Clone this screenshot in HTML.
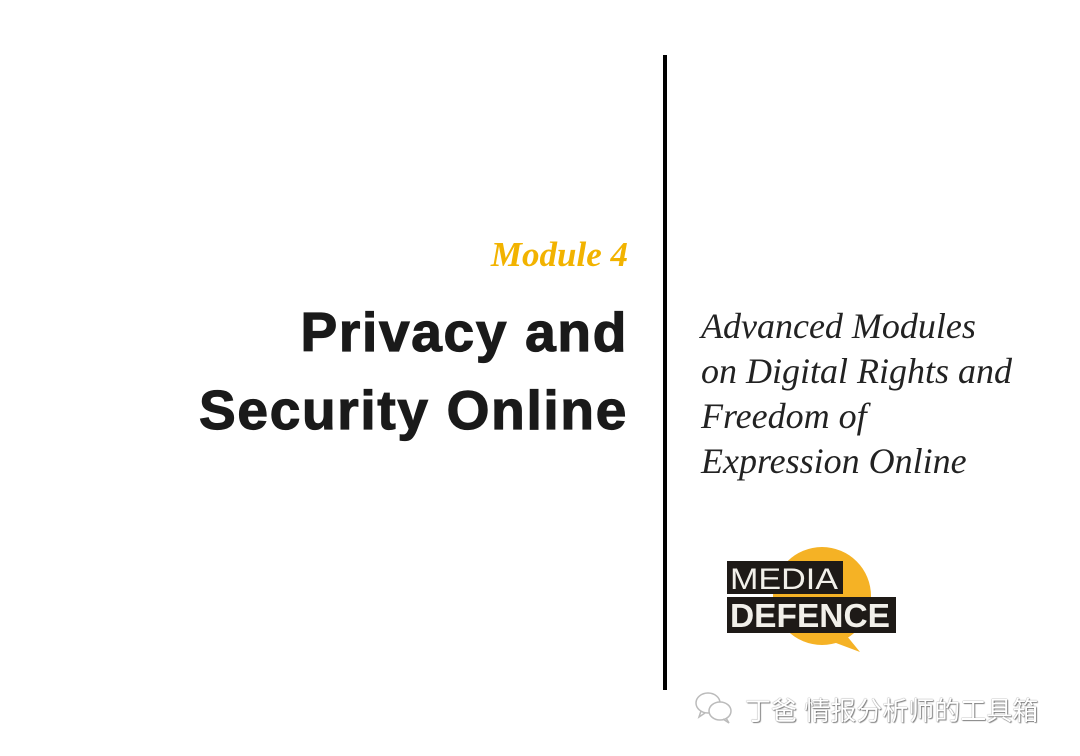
<!DOCTYPE html>
<html><head><meta charset="utf-8"><style>
body{margin:0;width:1080px;height:756px;background:#fff;position:relative;overflow:hidden}
.a{position:absolute}
.mod{right:452px;top:235px;font:italic bold 35px "Liberation Serif",serif;color:#f2b300;white-space:nowrap}
.t{right:452px;top:293px;font:bold 55px/78px "Liberation Sans",sans-serif;color:#1a1a1a;text-align:right;letter-spacing:1.7px;-webkit-text-stroke:1.2px #1a1a1a;white-space:nowrap}
.r{left:701px;top:304px;font:italic 36px/45px "Liberation Serif",serif;color:#222;white-space:nowrap}
.wm{left:745px;top:691px;font:26px "Liberation Sans","Noto Sans CJK SC",sans-serif;color:#fff;text-shadow:0 0 1px #555,1px 1px 1px #888;white-space:nowrap}
</style></head><body>
<div class="a" style="left:663px;top:55px;width:4px;height:635px;background:#000"></div>
<div class="a mod">Module 4</div>
<div class="a t">Privacy and<br>Security Online</div>
<div class="a r">Advanced Modules<br>on Digital Rights and<br>Freedom of<br>Expression Online</div>
<svg class="a" style="left:700px;top:530px" width="220" height="130">
<circle cx="122" cy="66" r="49" fill="#f5b225"/>
<path d="M142 100 L160 122 L128 110 Z" fill="#f5b225"/>
<rect x="27" y="31" width="116" height="33" fill="#1e1a17"/>
<rect x="27" y="67" width="169" height="36" fill="#1e1a17"/>
<text x="30" y="59" font-family="Liberation Sans,sans-serif" font-size="30" fill="#f2f0ea" textLength="108" lengthAdjust="spacingAndGlyphs">MEDIA</text>
<text x="30" y="97" font-family="Liberation Sans,sans-serif" font-size="33" font-weight="bold" fill="#f2f0ea" textLength="160" lengthAdjust="spacingAndGlyphs">DEFENCE</text>
</svg>
<svg class="a" style="left:693px;top:690px" width="44" height="36" fill="none" stroke="#bbb" stroke-width="1.5">
<ellipse cx="15" cy="13" rx="12" ry="10"/><ellipse cx="27" cy="21" rx="11" ry="9" fill="#fff"/>
<path d="M8 21 L6 27 L12 23"/><path d="M33 28 L36 33 L30 29"/>
</svg>
<div class="a wm">丁爸 情报分析师的工具箱</div>
</body></html>
